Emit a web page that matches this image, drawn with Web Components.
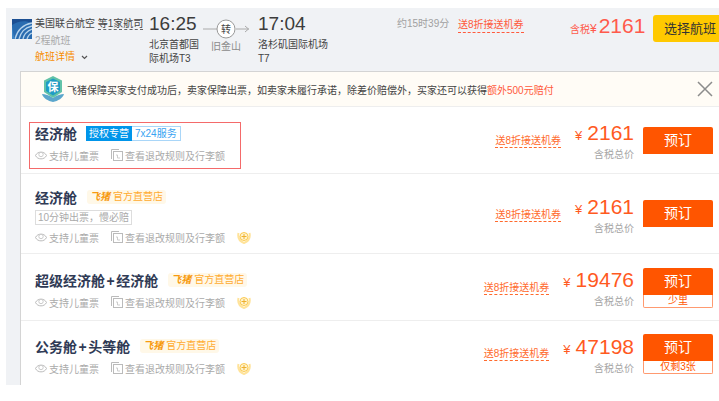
<!DOCTYPE html>
<html lang="zh">
<head>
<meta charset="utf-8">
<title>flight</title>
<style>
  html, body { margin: 0; padding: 0; background: #fff; overflow: hidden; }
  body { font-family: "Liberation Sans", "Noto Sans CJK SC", sans-serif; width: 719px; height: 401px; }
</style>
</head>
<body>
<flight-card>
  <flight-head slot="head"></flight-head>
  <flight-notice></flight-notice>
  <cabin-row name="经济舱" price="2161" tag="auth" outlined style="--info-top:16px;--price-top:14px;--btn-top:20px;--coupon-top:27px"></cabin-row>
  <cabin-row name="经济舱" price="2161" tag="shop" note="10分钟出票，慢必赔" extra style="--row-h:79px;--info-top:13px;--price-top:21px;--btn-top:26px;--coupon-top:34px"></cabin-row>
  <cabin-row name="超级经济舱+经济舱" price="19476" tag="shop" stock="少里" extra style="--info-top:16px;--price-top:14px;--btn-top:14px;--coupon-top:27px"></cabin-row>
  <cabin-row name="公务舱+头等舱" price="47198" tag="shop" stock="仅剩3张" extra last style="--row-h:64px;--info-top:15px;--price-top:14px;--btn-top:13px;--coupon-top:26px"></cabin-row>
</flight-card>
<script>
class FlightCard extends HTMLElement {
  constructor() {
    super();
    this.attachShadow({ mode: "open" });
    this.shadowRoot.innerHTML = `
      <style>
        :host { display: block; margin: 8px 0 0 6px; background: #f0f2f5; height: 377px; overflow: hidden; }
        .panel { margin-left: 14px; border-top: 1px solid #d4d4d4; border-left: 1px solid #d4d4d4; background: #fff; }
      </style>
      <slot name="head"></slot>
      <div class="panel"><slot></slot></div>
    `;
  }
}

class FlightHead extends HTMLElement {
  constructor() {
    super();
    this.attachShadow({ mode: "open" });
    this.shadowRoot.innerHTML = `
      <style>
        :host { display: flex; height: 63px; color: #444; font-size: 10px; line-height: 14px; white-space: nowrap; }
        .logo { width: 20px; height: 20px; margin: 11px 3px 0 6px; flex: none; }
        .air { width: 114px; padding-top: 9px; flex: none; }
        .air .name { height: 15px; }
        .air u { text-decoration: none; border-bottom: 1px dashed #666; }
        .air .sub { color: #aaa; margin-top: 2px; height: 15px; }
        .air .more { color: #f78c00; margin-top: 1px; display: flex; align-items: center; gap: 6px; }
        .time { font-size: 19px; line-height: 24px; color: #3c3c3c; }
        .dep { width: 54px; padding-top: 4px; flex: none; }
        .place { margin-top: 2px; }
        .route { width: 55px; flex: none; padding-top: 11px; color: #8c8c8c; box-sizing: border-box; }
        .route svg { display: block; margin-bottom: 1px; }
        .route span { display: block; padding-left: 8px; }
        .arr { width: 139px; padding-top: 4px; flex: none; }
        .len { width: 61px; flex: none; padding-top: 9px; color: #a0a0a0; }
        .coupon { width: 112px; flex: none; padding-top: 9px; }
        .coupon span { display: inline-block; color: #ff5a3c; border-bottom: 1px dashed #ff5a3c; line-height: 15px; }
        .price { width: 83px; flex: none; color: #ff5a4c; display: flex; align-items: baseline; padding-top: 5px; height: 26px; }
        .price .y { font-size: 12px; margin-right: 2px; }
        .price b { font-weight: normal; font-size: 21px; line-height: 26px; }
        .btn { flex: none; width: 66px; height: 27px; margin-top: 7px; background: #ffc900; border-radius: 3px 0 0 3px; font-size: 13px; line-height: 27px; padding-left: 11px; box-sizing: border-box; color: #333; overflow: hidden; }
      </style>
      <svg class="logo" viewBox="0 0 20 20">
        <rect width="20" height="20" fill="#2a6cb0"/>
        <path d="M0 0H20V4C13 1 6 2 0 6z" fill="#1c4f92"/>
        <path d="M3 20C5 12 9 6 20 4M7 20C9 13 12 9 20 7M11 20C12 15 15 12 20 10M15 20C16 17 17 15 20 14" fill="none" stroke="#b7d4ec" stroke-width="1.3"/>
        <path d="M0 20V8C1 12 1 16 3 20z" fill="#3f86c6"/>
      </svg>
      <div class="air">
        <div class="name">美国联合航空 <u>等1家航司</u></div>
        <div class="sub">2程航班</div>
        <div class="more">航班详情
          <svg width="7" height="5" viewBox="0 0 7 5"><path d="M1 1l2.500 2.500L6 1" fill="none" stroke="#555" stroke-width="1.2"/></svg>
        </div>
      </div>
      <div class="dep">
        <div class="time">16:25</div>
        <div class="place">北京首都国<br>际机场T3</div>
      </div>
      <div class="route">
        <svg width="48" height="20" viewBox="0 0 48 20">
          <path d="M0 10H14M33 10H46M42 7l3.500 3-3.500 3" fill="none" stroke="#aaa"/>
          <circle cx="23" cy="10" r="9" fill="#fff" stroke="#999"/>
          <text x="23" y="14" font-size="10" text-anchor="middle" fill="#444">转</text>
        </svg>
        <span>旧金山</span>
      </div>
      <div class="arr">
        <div class="time">17:04</div>
        <div class="place">洛杉矶国际机场<br>T7</div>
      </div>
      <div class="len">约15时39分</div>
      <div class="coupon"><span>送8折接送机券</span></div>
      <div class="price"><span>含税</span><span class="y">¥</span><b>2161</b></div>
      <div class="btn">选择航班</div>
    `;
  }
}

class FlightNotice extends HTMLElement {
  constructor() {
    super();
    this.attachShadow({ mode: "open" });
    this.shadowRoot.innerHTML = `
      <style>
        :host { display: flex; align-items: center; height: 34px; background: #fffcf6; border-bottom: 1px solid #eee; font-size: 10px; color: #444; white-space: nowrap; padding-left: 20px; }
        svg.shield { margin-right: 2px; flex: none; }
        em { font-style: normal; color: #ff5a3c; }
        .close { margin-left: auto; margin-right: 6px; flex: none; }
      </style>
      <svg class="shield" width="24" height="26" viewBox="0 0 24 26">
        <path d="M1 18c3 0 7 1 11 4 4-3 8-4 11-4-1 4-6 7-11 8-5-1-10-4-11-8z" fill="#5ba6cc"/>
        <path d="M12 0l9 4.500V16l-9 6-9-6V4.500z" fill="#62c2a8"/>
        <path d="M12 2.500l7 3.500v9l-7 4.500-7-4.500V6z" fill="#1f9cc4"/>
        <text x="12" y="15" font-size="11" font-weight="bold" text-anchor="middle" fill="#fff">保</text>
      </svg>
      <span>飞猪保障买家支付成功后，卖家保障出票，如卖家未履行承诺，除差价赔偿外，买家还可以获得<em>额外500元赔付</em></span>
      <svg class="close" width="16" height="16" viewBox="0 0 16 16"><path d="M1 1l14 14M15 1L1 15" stroke="#8c8c8c" stroke-width="1.500" fill="none"/></svg>
    `;
  }
}

class CabinRow extends HTMLElement {
  constructor() {
    super();
    this.attachShadow({ mode: "open" });
  }
  connectedCallback() {
    let tag = this.getAttribute("tag");
    let note = this.getAttribute("note");
    let stock = this.getAttribute("stock");
    let name = this.getAttribute("name").replace("+", `<span class="plus">+</span>`);
    let tagHtml = tag === "auth"
      ? `<span class="auth"><i>授权专营</i><i>7x24服务</i></span>`
      : `<span class="shop"><b>飞猪</b>官方直营店</span>`;
    this.shadowRoot.innerHTML = `
      <style>
        :host { display: flex; height: var(--row-h, 66px); border-bottom: 1px solid #eee; position: relative; }
        :host([last]) { border-bottom: 0; }
        .info { flex: 1; padding: var(--info-top) 0 0 14px; min-width: 0; }
        .title { display: flex; align-items: center; gap: 9px; height: 20px; }
        .title strong { font-size: 14px; color: #2f3a55; font-weight: bold; white-space: nowrap; }
        .plus { padding: 0 1.5px; }
        .auth { display: inline-flex; font-size: 10px; line-height: 13px; height: 15px; }
        .auth i { font-style: normal; padding: 0 3px; border: 1px solid transparent; }
        .auth i:first-child { background: #0095ea; color: #fff; border-width: 1px 0 1px 0; }
        .auth i:last-child { color: #38a3f2; border-color: #a9d6f8; border-left: 0; }
        .shop { background: #fff8e8; color: #ffab30; font-size: 10px; line-height: 14px; padding: 0 3px; border-radius: 3px; white-space: nowrap; margin-left: 1px; }
        .shop b { font-style: italic; color: #f79a0e; margin-right: 3px; }
        .note { display: table; font-size: 10px; line-height: 13px; color: #aaa; border: 1px solid #ddd; padding: 0 2px; margin: 3px 0 0; white-space: nowrap; }
        .meta { display: flex; align-items: center; font-size: 10px; color: #aaa; margin-top: 4px; height: 16px; white-space: nowrap; }
        .meta svg { flex: none; margin-right: 2px; }
        .meta .kid { width: 76px; display: flex; align-items: center; }
        .meta .rule { display: flex; align-items: center; margin-right: 12px; }
        .side { flex: none; display: flex; align-items: flex-start; }
        .coupon { font-size: 10px; color: #ff6a2c; white-space: nowrap; margin-top: var(--coupon-top); height: 13px; margin-right: 14px; border-bottom: 1px dashed #ff6a2c; line-height: 14px; }
        .money { flex: none; text-align: right; margin-right: 9px; padding-top: var(--price-top); color: #ff5a1f; white-space: nowrap; }
        .money .n { font-size: 21px; line-height: 24px; }
        .money .y { font-size: 13px; margin-right: 5px; }
        .money .t { font-size: 10px; line-height: 13px; color: #a5a5a5; }
        .btn { width: 70px; margin: var(--btn-top) 6px 0 0; flex: none; }
        .btn .b { background: #ff5500; color: #fff; height: 27px; line-height: 27px; text-align: center; font-size: 14px; border-radius: 2px 2px 0 0; }
        .btn .s { border: 1px solid #ff9a70; border-top: 0; height: 12px; line-height: 12px; text-align: center; font-size: 10px; color: #ff5500; border-radius: 0 0 2px 2px; overflow: hidden; }
        .mark { position: absolute; left: 8px; top: 15px; width: 212px; height: 47px; border: 1px solid #f46a6a; box-sizing: border-box; }
      </style>
      ${this.hasAttribute("outlined") ? `<div class="mark"></div>` : ""}
      <div class="info">
        <div class="title"><strong>${name}</strong>${tagHtml}</div>
        ${note ? `<div class="note">${note}</div>` : ""}
        <div class="meta">
          <span class="kid">
            <svg width="12" height="9" viewBox="0 0 12 9"><path d="M.5 4.500c2-4.500 9-4.500 11 0-2 4.500-9 4.500-11 0z" fill="none" stroke="#bbb"/><circle cx="6" cy="3.500" r="2.200" fill="none" stroke="#ccc"/></svg>支持儿童票
          </span>
          <span class="rule">
            <svg width="12" height="12" viewBox="0 0 12 12"><path d="M.5 10V.5H8" fill="none" stroke="#bbb"/><rect x="2.500" y="2.500" width="9" height="9" fill="none" stroke="#bbb"/><path d="M5 6h1.500v3H9" fill="none" stroke="#ccc"/></svg>查看退改规则及行李额
          </span>
          ${this.hasAttribute("extra") ? `<svg width="14" height="13" viewBox="0 0 14 13"><path d="M1.500 2C.5 7 3 10.500 7 12c4-1.500 6.500-5 5.500-10" fill="none" stroke="#ffe39a" stroke-width="2"/><circle cx="7" cy="5.500" r="4" fill="#fff3cf" stroke="#fbc94f"/><path d="M4.500 5.500h5M7 3v5" stroke="#eeb02f"/></svg>` : ""}
        </div>
      </div>
      <div class="side">
        <span class="coupon">送8折接送机券</span>
        <div class="money">
          <div class="n"><span class="y">¥</span>${this.getAttribute("price")}</div>
          <div class="t">含税总价</div>
        </div>
        <div class="btn">
          <div class="b">预订</div>
          ${stock ? `<div class="s">${stock}</div>` : ""}
        </div>
      </div>
    `;
  }
}

customElements.define("flight-card", FlightCard);
customElements.define("flight-head", FlightHead);
customElements.define("flight-notice", FlightNotice);
customElements.define("cabin-row", CabinRow);
</script>
</body>
</html>
